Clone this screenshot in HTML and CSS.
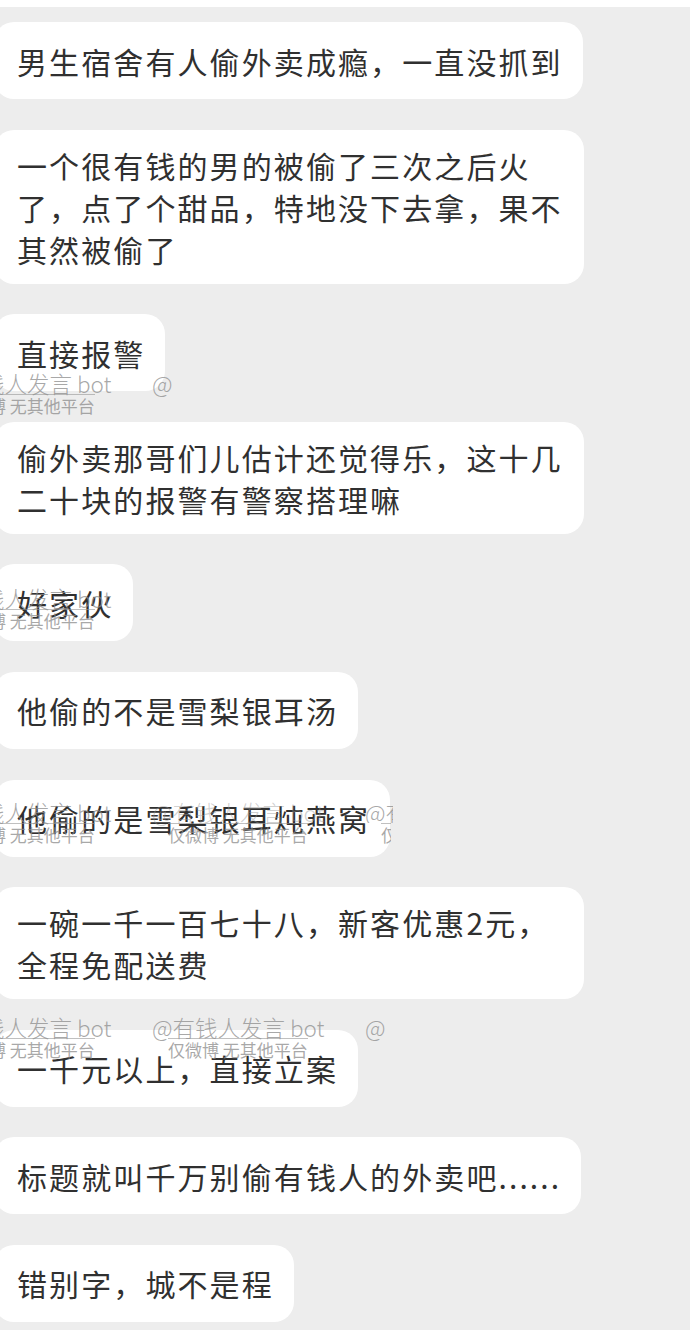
FILE: index.html
```html
<!DOCTYPE html>
<html lang="zh-CN">
<head>
  <meta charset="UTF-8" />
  <meta name="viewport" content="width=device-width, initial-scale=1.0"/>
  <title>聊天记录</title>
  <link rel="stylesheet" href="styles.css">
</head>
<body>

<div class="topbar"></div>

<main class="chat">
  <div class="msg">男生宿舍有人偷外卖成瘾，一直没抓到</div>
  <div class="msg">一个很有钱的男的被偷了三次之后火了，点了个甜品，特地没下去拿，果不其然被偷了</div>
  <div class="msg">直接报警</div>
  <div class="msg">偷外卖那哥们儿估计还觉得乐，这十几二十块的报警有警察搭理嘛</div>
  <div class="msg">好家伙</div>
  <div class="msg">他偷的不是雪梨银耳汤</div>
  <div class="msg">他偷的是雪梨银耳炖燕窝</div>
  <div class="msg">一碗一千一百七十八，新客优惠2元，全程免配送费</div>
  <div class="msg">一千元以上，直接立案</div>
  <div class="msg">标题就叫千万别偷有钱人的外卖吧......</div>
  <div class="msg">错别字，城不是程</div>

  <!-- watermark rows left over on the screenshot -->
  <div class="watermark wm-a">
    <div class="wm-tile"><span class="wm-name">@有钱人发言 bot</span><span class="wm-note">仅微博 无其他平台</span></div>
    <div class="wm-tile"><span class="wm-name">@<span class="hid">有钱人发言 bot</span></span><span class="wm-note hid">仅微博 无其他平台</span></div>
  </div>
  <div class="watermark wm-b">
    <div class="wm-tile"><span class="wm-name">@有钱人发言 bot</span><span class="wm-note">仅微博 无其他平台</span></div>
  </div>
  <div class="watermark wm-c">
    <div class="wm-tile"><span class="wm-name">@有钱人发言 bot</span><span class="wm-note">仅微博 无其他平台</span></div>
    <div class="wm-tile"><span class="wm-name faint">@有钱人发言 bot</span><span class="wm-note">仅微博 无其他平台</span></div>
    <div class="wm-tile"><span class="wm-name clip">@有</span><span class="wm-note clip">仅</span></div>
  </div>
  <div class="watermark wm-d">
    <div class="wm-tile"><span class="wm-name">@有钱人发言 bot</span><span class="wm-note">仅微博 无其他平台</span></div>
    <div class="wm-tile"><span class="wm-name">@有钱人发言 bot</span><span class="wm-note">仅微博 无其他平台</span></div>
    <div class="wm-tile"><span class="wm-name">@</span><span class="wm-note hid">仅</span></div>
  </div>
</main>

</body>
</html>
```

FILE: styles.css
```css
body {
  margin: 0;
  padding: 0;
  background-color: #ededed;
  font-family: "Noto Sans CJK SC", "Noto Sans", sans-serif;
  overflow: hidden;
}

.topbar {
  height: 7px;
  background-color: #ffffff;
}

.chat {
  position: relative;
  display: flex;
  flex-direction: column;
  align-items: flex-start;
  gap: 30.6px;
  padding: 15px 0 0;
  overflow: hidden;
}

.msg {
  box-sizing: border-box;
  display: flex;
  align-items: center;
  min-height: 77px;
  max-width: 590px;
  margin-left: -6px;
  padding: 14px 20px 14px 23px;
  background: #ffffff;
  border-radius: 20px;
  color: #303030;
  font-size: 30px;
  line-height: 42px;
  letter-spacing: 2.1px;
}

.watermark {
  position: absolute;
  left: -61px;
  display: flex;
  color: rgba(140, 140, 140, 0.75);
  pointer-events: none;
}

.wm-a { top: 365px; }
.wm-b { top: 580px; }
.wm-c { top: 794px; }
.wm-d { top: 1009px; }

.wm-tile {
  width: 213px;
  display: flex;
  flex-direction: column;
  align-items: flex-start;
  flex-shrink: 0;
}

.wm-name {
  font-size: 22.5px;
  font-weight: 300;
  line-height: 22px;
  white-space: nowrap;
}

.wm-note {
  margin-left: 16px;
  font-size: 17px;
  line-height: 21px;
  white-space: nowrap;
  border-top: 1px solid rgba(150, 150, 150, 0.6);
}

.faint {
  color: rgba(150, 150, 150, 0.45);
}

.clip {
  display: inline-block;
  max-width: 28px;
  overflow: hidden;
}

.wm-note.clip {
  max-width: 10px;
}

.hid {
  visibility: hidden;
}
```
